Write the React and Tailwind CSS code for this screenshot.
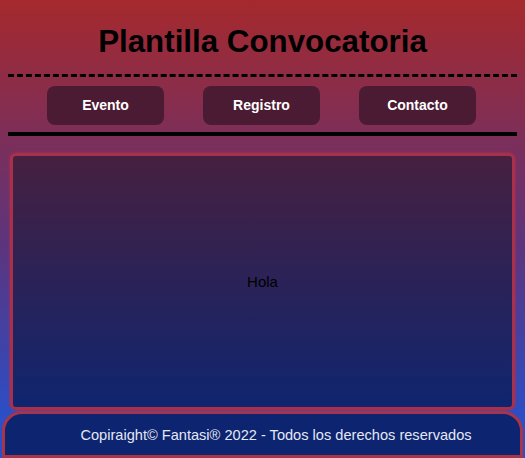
export default function App() {
  return (
    <div
      className="w-[525px] h-[458px] overflow-hidden flex flex-col bg-[linear-gradient(to_bottom,#a5292d_0%,#7a2f5c_32%,#5a3580_55%,#2a4fc8_92%)]"
      style={{ fontFamily: '"Liberation Sans", Arial, sans-serif' }}
    >
      <header className="px-2">
        <h1 className="pt-[24px] pb-[14px] text-center text-[31.3px] leading-[36px] font-bold text-black">
          Plantilla Convocatoria
        </h1>
        <div className="border-t-[3px] border-dashed border-black" />
        <nav className="flex justify-between pl-[39px] pr-[41px] pt-[9px] pb-[7px]">
          {["Evento", "Registro", "Contacto"].map((t) => (
            <a
              key={t}
              className="w-[117px] h-[39px] flex items-center justify-center rounded-[8px] bg-[#4b1b34] text-white text-[14px] font-bold"
            >
              {t}
            </a>
          ))}
        </nav>
        <div className="border-t-[4px] border-black" />
      </header>

      <main className="mx-[10px] mt-[17px] h-[257px] flex items-center justify-center rounded-[6px] border-[3px] border-[#a8304a] bg-[linear-gradient(to_bottom,#462040,#0f256f)] shadow-[0_0_3px_#b03050]">
        <p className="pt-[2px] text-[15px] text-black">Hola</p>
      </main>

      <footer className="mx-[2px] mt-[1px] flex-1 flex items-center justify-center pl-[27px] pt-[3px] rounded-t-[20px] border-[3px] border-[#a8344a] bg-[#0d2470]">
        <p className="text-[14.6px] text-[#e4e8f4]">
          Copiraight© Fantasi® 2022 - Todos los derechos reservados
        </p>
      </footer>
    </div>
  );
}
